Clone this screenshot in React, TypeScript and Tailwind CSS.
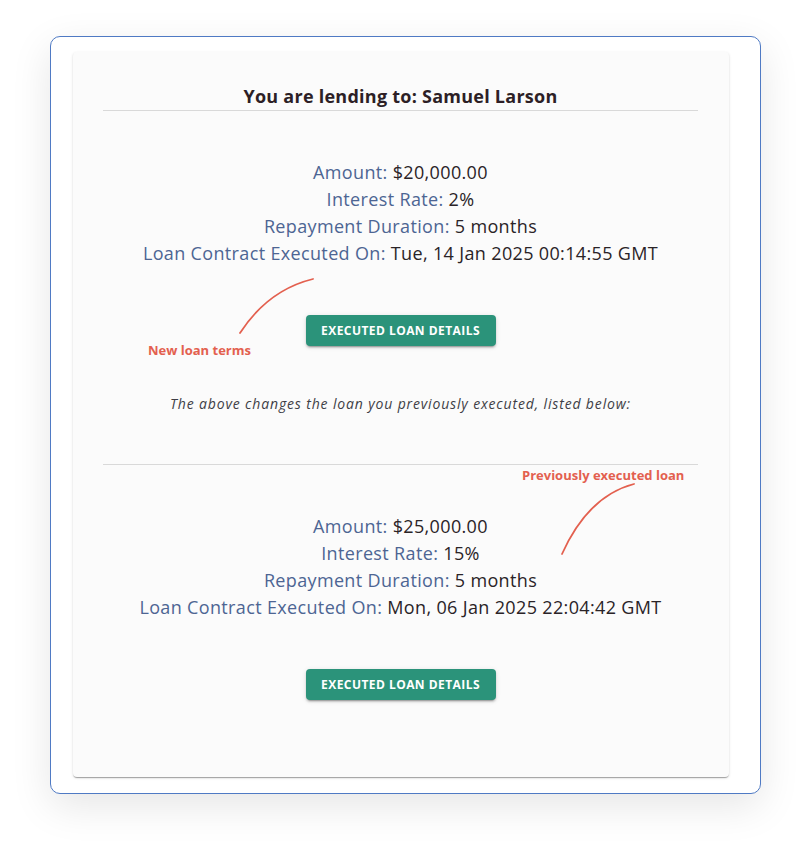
import React from "react";

const font = { fontFamily: '"Open Sans", "Liberation Sans", sans-serif' };

function Row({ label, value }: { label: string; value: string }) {
  return (
    <div className="text-[18px] leading-[27px] tracking-[0.35px]">
      <span className="text-[#4d6593]">{label}: </span>
      <span className="text-[#2a2327]">{value}</span>
    </div>
  );
}

function Button() {
  return (
    <div className="flex justify-center">
      <button className="h-[31px] w-[190px] rounded-[4px] bg-[#2b937a] text-[12px] font-bold uppercase tracking-[0.45px] text-white shadow-[0_3px_1px_-2px_rgba(0,0,0,0.2),0_2px_2px_0_rgba(0,0,0,0.14),0_1px_5px_0_rgba(0,0,0,0.12)]">
        Executed Loan Details
      </button>
    </div>
  );
}

export default function App() {
  return (
    <div className="relative min-h-[857px] w-[810px] bg-white pl-[50px] pt-[36px]" style={font}>
      <div className="h-[758px] w-[711px] rounded-[10px] border border-[#4f7ac4] bg-white pl-[22px] pt-[15px] shadow-[0_12px_40px_rgba(0,0,0,0.10)]">
        <div className="h-[725px] w-[656px] rounded-[4px] bg-[#fbfbfb] pl-[30px] pr-[31px] pt-[30px] shadow-[0_2px_1px_-1px_rgba(0,0,0,0.2),0_1px_1px_0_rgba(0,0,0,0.14),0_1px_3px_0_rgba(0,0,0,0.12)]">
          <div className="border-b border-[#d9d9d9] text-center text-[18px] font-bold leading-[28px] tracking-[0.25px] text-[#2d1f26]">
            You are lending to: Samuel Larson
          </div>
          <div className="mt-[48px] text-center">
            <Row label="Amount" value="$20,000.00" />
            <Row label="Interest Rate" value="2%" />
            <Row label="Repayment Duration" value="5 months" />
            <Row label="Loan Contract Executed On" value="Tue, 14 Jan 2025 00:14:55 GMT" />
          </div>
          <div className="mt-[48px]">
            <Button />
          </div>
          <div className="mt-[48px] text-center text-[14px] italic leading-[20px] tracking-[0.85px] text-[#3e3e46]">
            The above changes the loan you previously executed, listed below:
          </div>
          <div className="mt-[50px] border-t border-[#d9d9d9]" />
          <div className="mt-[48px] text-center">
            <Row label="Amount" value="$25,000.00" />
            <Row label="Interest Rate" value="15%" />
            <Row label="Repayment Duration" value="5 months" />
            <Row label="Loan Contract Executed On" value="Mon, 06 Jan 2025 22:04:42 GMT" />
          </div>
          <div className="mt-[48px]">
            <Button />
          </div>
        </div>
      </div>

      <div className="absolute left-[148px] top-[341px] text-[13px] font-bold leading-[18px] text-[#e3604f]">
        New loan terms
      </div>
      <div className="absolute left-[522px] top-[466px] text-[13px] font-bold leading-[18px] text-[#e3604f]">
        Previously executed loan
      </div>
      <svg className="pointer-events-none absolute left-0 top-0" width="810" height="857" viewBox="0 0 810 857">
        <path d="M240 333 Q268 290 313 279" fill="none" stroke="#e3604f" strokeWidth="1.8" strokeLinecap="round" />
        <path d="M562 554 Q588 496 634 484" fill="none" stroke="#e3604f" strokeWidth="1.8" strokeLinecap="round" />
      </svg>
    </div>
  );
}
